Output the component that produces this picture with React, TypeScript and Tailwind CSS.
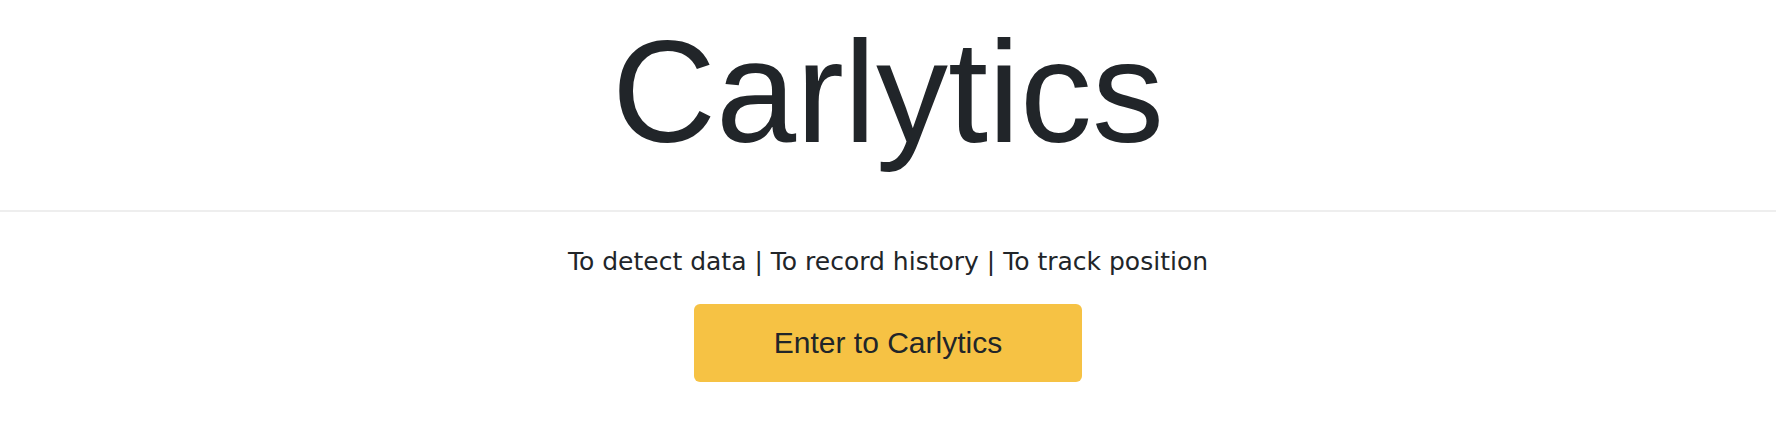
export default function App() {
  return (
    <div className="w-[1776px] bg-white text-[#212529]">
      <div className="flex flex-col items-center pt-[7px]">
        <h1 className="text-[144px] leading-[1.2] font-normal font-['Liberation_Sans',Arial,sans-serif]">
          Carlytics
        </h1>
      </div>
      <div className="mt-[30px] h-[2px] w-full bg-[#eeeeee]" />
      <div className="flex flex-col items-center pt-[32px]">
        <p className="text-[25px] leading-[36px] font-['DejaVu_Sans',Verdana,sans-serif]">
          To detect data | To record history | To track position
        </p>
        <button className="mt-[24px] flex h-[78px] w-[388px] items-center justify-center rounded-[6px] bg-[#f6c244] text-[30px] leading-[45px] text-[#212529] font-['Liberation_Sans',Arial,sans-serif]">
          Enter to Carlytics
        </button>
      </div>
    </div>
  );
}
